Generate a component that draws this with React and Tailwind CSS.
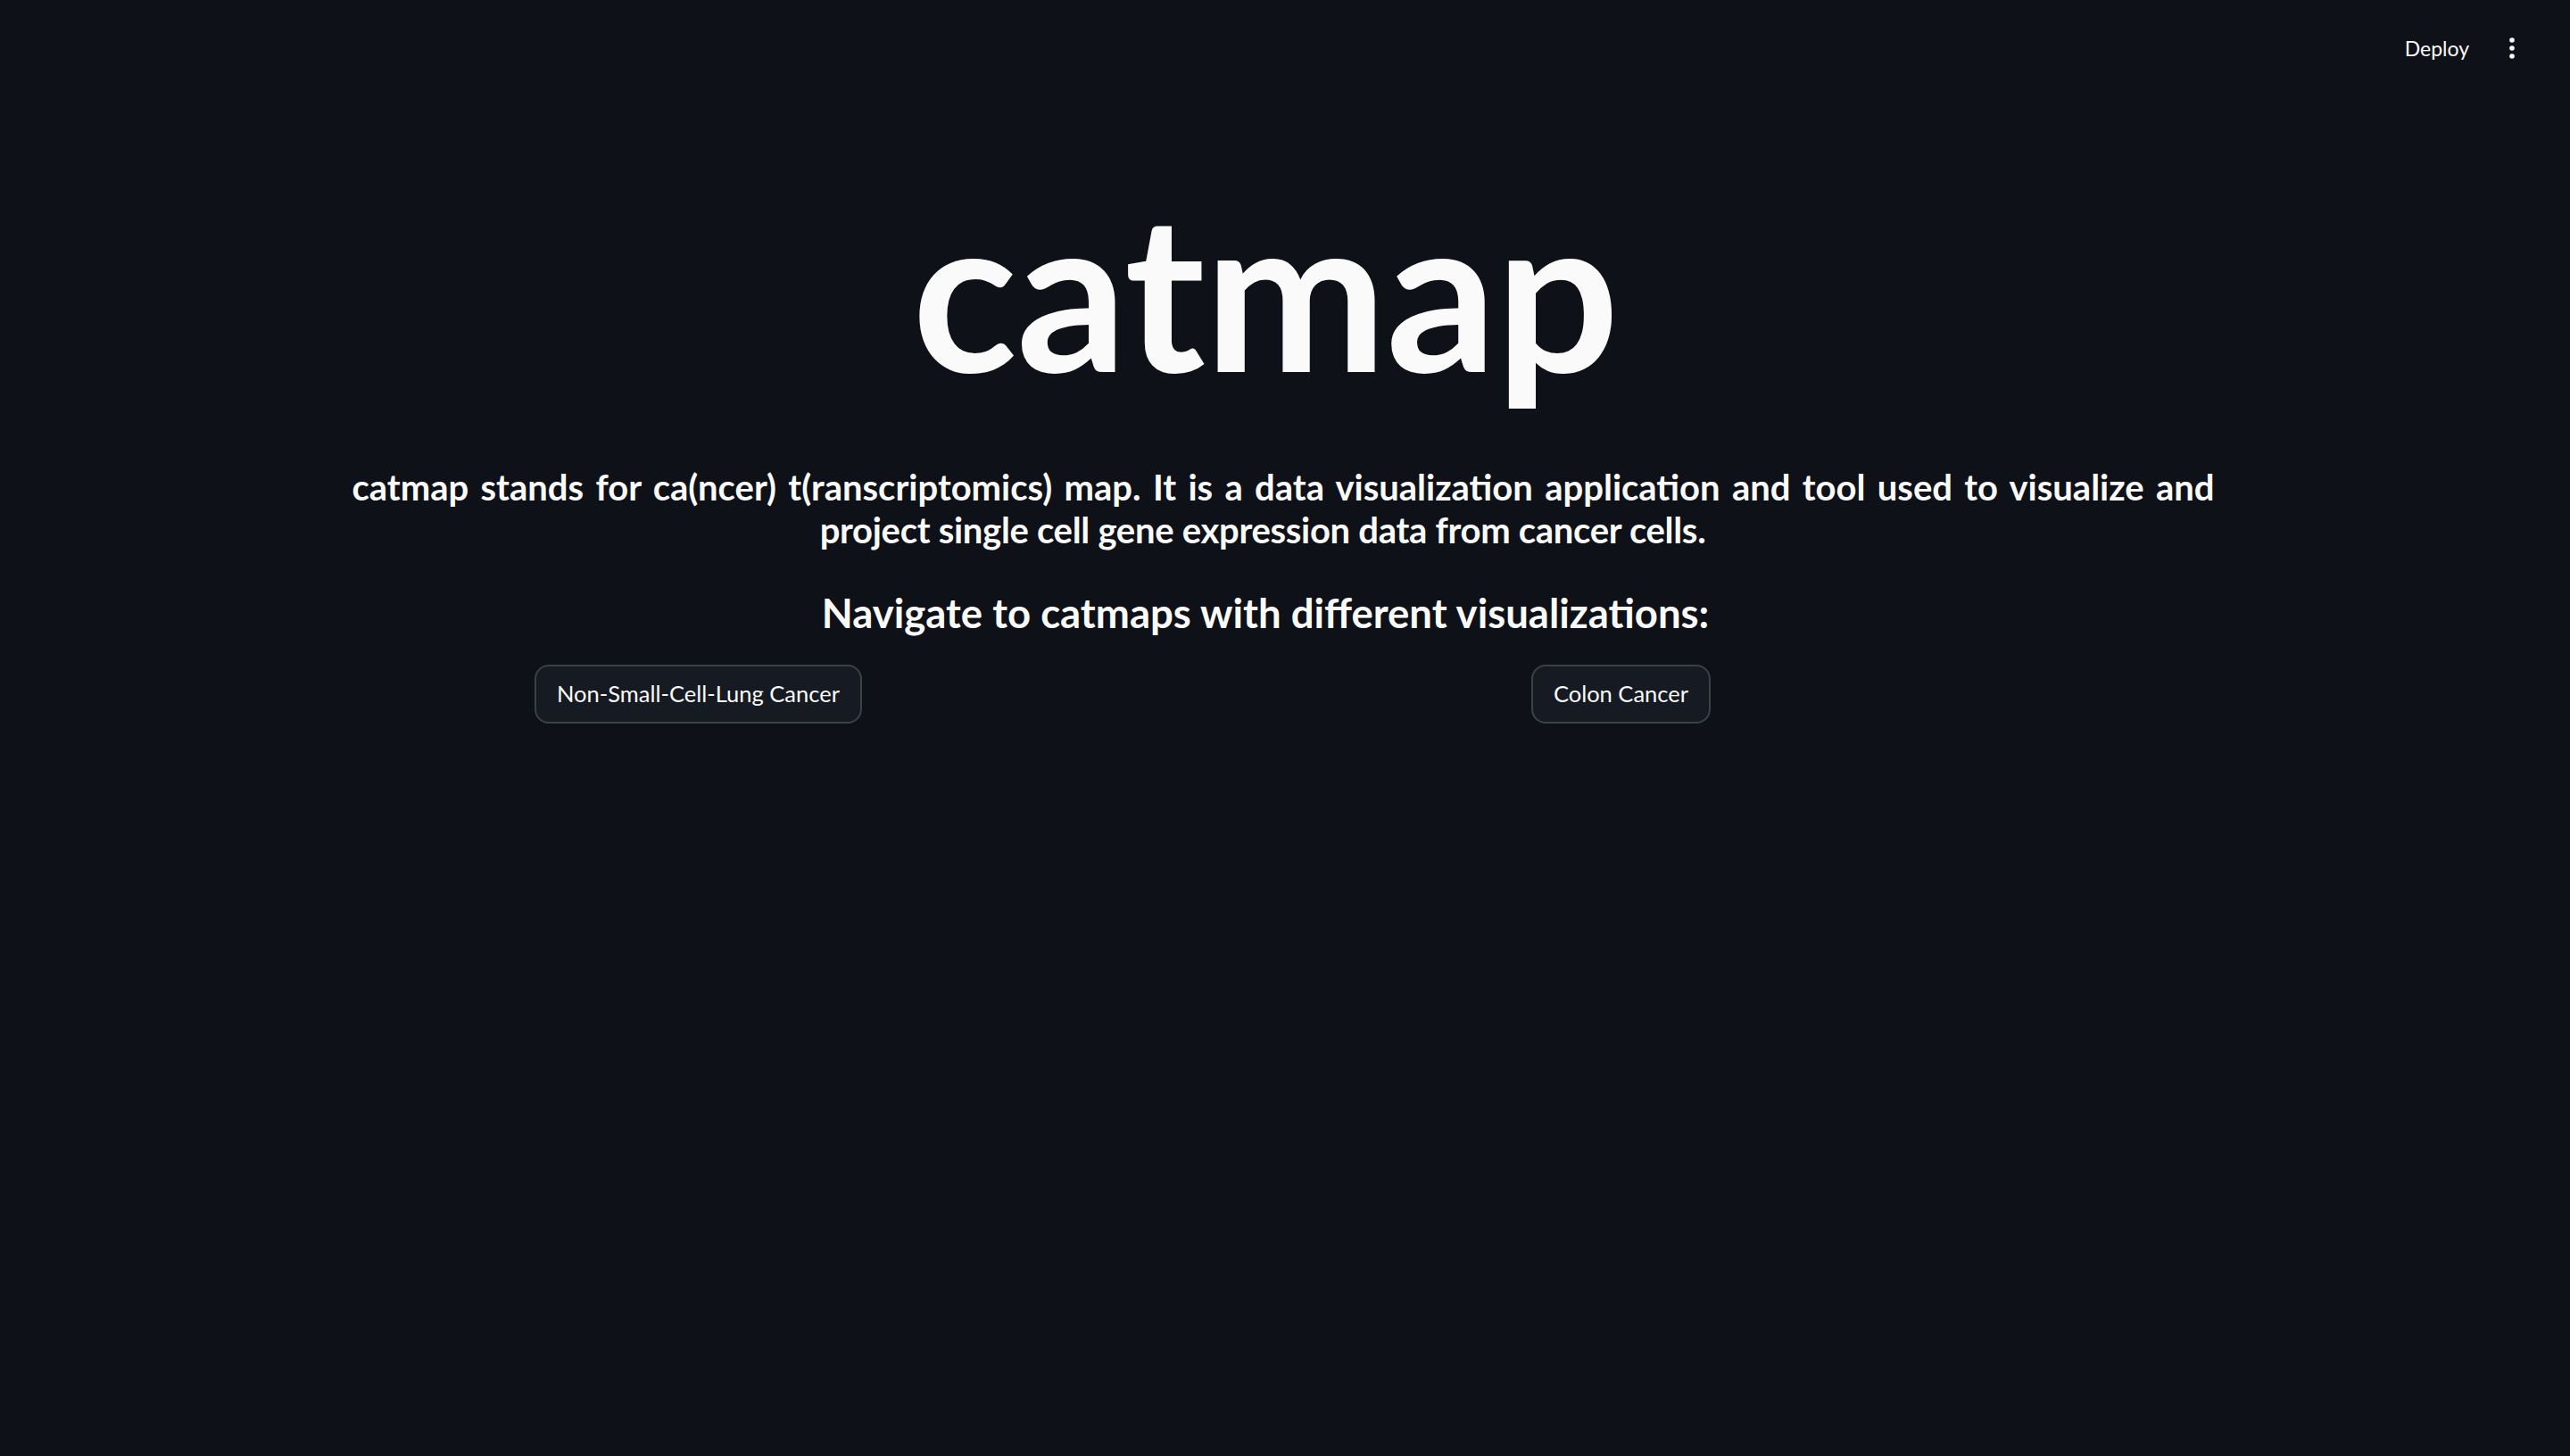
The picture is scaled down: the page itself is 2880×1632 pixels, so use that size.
import React from "react";

const FONT = { fontFamily: "Lato, 'Noto Sans', sans-serif" };

const LINKS = ["Non-Small-Cell-Lung Cancer", "Colon Cancer"];

function MoreIcon() {
  return (
    <svg width="8" height="26" viewBox="0 0 8 26" className="fill-[#fafafa]">
      <circle cx="4" cy="4" r="2.8" />
      <circle cx="4" cy="13" r="2.8" />
      <circle cx="4" cy="22" r="2.8" />
    </svg>
  );
}

export default function App() {
  return (
    <div className="min-h-screen bg-[#0e1117] text-[#fafafa]" style={FONT}>
      <header className="flex h-[108px] items-center justify-end gap-[44px] pr-[61px]">
        <button className="text-[23px] leading-none text-[#fafafa]">Deploy</button>
        <MoreIcon />
      </header>

      <main className="flex flex-col items-center pr-[44px]">
        <h1 className="mt-[93px] text-[244px] font-bold leading-none tracking-[-1px]">catmap</h1>

        <p className="ml-[40px] mt-[77px] w-[2087px] text-[40px] font-bold leading-[48px]">
          <span className="block text-justify [text-align-last:justify]">
            catmap stands for ca(ncer) t(ranscriptomics) map. It is a data visualization application and tool used to visualize and
          </span>
          <span className="block pr-[46px] text-center tracking-[-0.3px]">
            project single cell gene expression data from cancer cells.
          </span>
        </p>

        <h2 className="mt-[42px] text-[45.5px] font-bold leading-[1.2]">
          Navigate to catmaps with different visualizations:
        </h2>

        <div className="mt-[30px] ml-[599px] flex w-[1318px] justify-between self-start">
          {LINKS.map((label) => (
            <button
              key={label}
              className="h-[66px] rounded-[16px] border-2 border-[#3d4048] bg-[#161a22] px-[23px] text-[25.5px] text-[#fafafa]"
            >
              {label}
            </button>
          ))}
        </div>
      </main>
    </div>
  );
}
